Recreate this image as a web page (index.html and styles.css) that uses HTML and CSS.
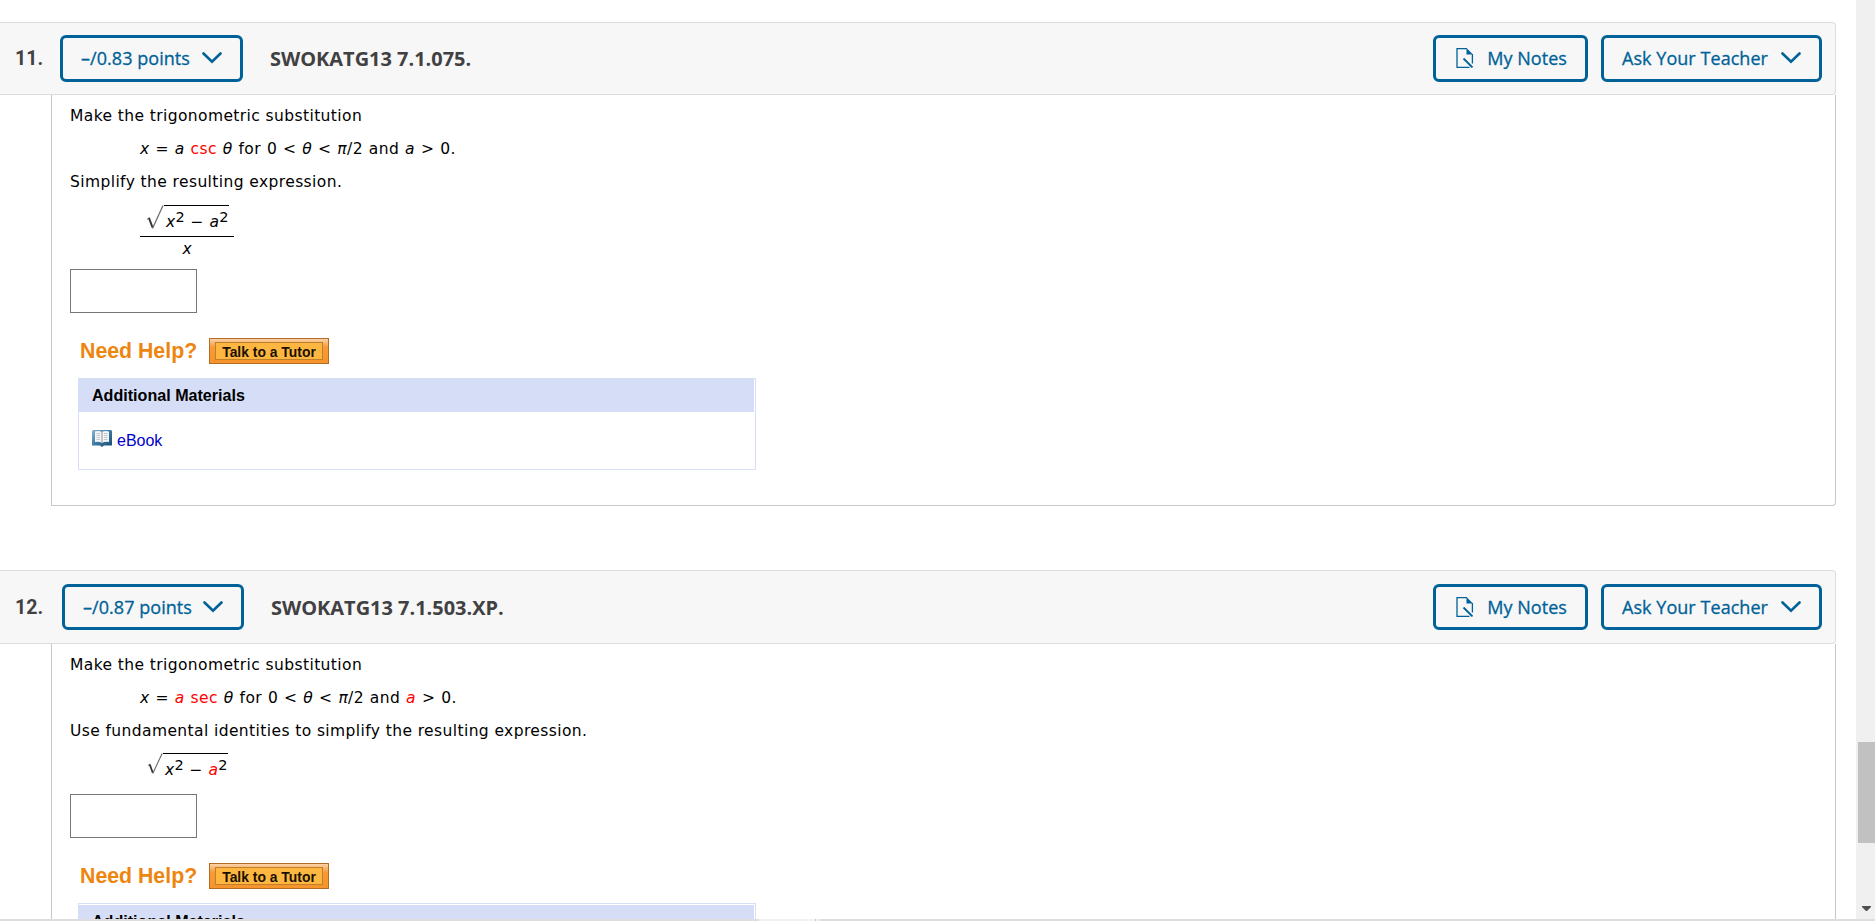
FILE: index.html
```html
<!DOCTYPE html>
<html lang="en">
<head>
  <meta charset="UTF-8">
  <meta name="viewport" content="width=device-width, initial-scale=1.0">
  <title>Assignment</title>
  <link rel="stylesheet" href="styles.css">
</head>
<body>
  <svg class="sprite" width="0" height="0">
    <symbol id="chevron" viewBox="0 0 20 12">
      <path d="M1.5 1.5 L10 9.7 L18.5 1.5" fill="none" stroke="#006298" stroke-width="2.6" stroke-linecap="round"/>
    </symbol>
    <symbol id="notes" viewBox="0 0 18 20">
      <path d="M11 .6 H1 V19.4 H13.5 M16.4 6 V15.5" fill="none" stroke="#006298" stroke-width="1.3"/>
      <path d="M10.5 0 L17 6.5 H10.5 Z" fill="#006298"/>
      <path d="M7.5 10.5 L16.5 19.5" stroke="#006298" stroke-width="1.8"/>
    </symbol>
    <symbol id="radical" viewBox="0 0 18 24" preserveAspectRatio="none">
      <path d="M1 14.5 L3.5 12.5" fill="none" stroke="#666" stroke-width="1"/>
      <path d="M3 13 L6.5 22.5" fill="none" stroke="#333" stroke-width="2"/>
      <path d="M6.5 23.5 L17 .5" fill="none" stroke="#666" stroke-width="1.2"/>
    </symbol>
    <symbol id="book" viewBox="0 0 20 17">
      <linearGradient id="cover" x1="0" y1="0" x2="1" y2="1">
        <stop offset="0" stop-color="#8db4d2"/>
        <stop offset=".5" stop-color="#3d77a3"/>
        <stop offset="1" stop-color="#174a72"/>
      </linearGradient>
      <path d="M0 1 L1 0 H19 L20 1 V15.5 H12 L10 17 L8 15.5 H0 Z" fill="url(#cover)"/>
      <path d="M3 1.5 Q7 .3 10 2 Q13 .3 17 1.5 V12 Q13 11 10 13 Q7 11 3 12 Z" fill="#f4f5f6"/>
      <path d="M10 1.5 V13" stroke="#8b9399" stroke-width="1"/>
      <path d="M4.5 3.5 H8 M4.5 5.5 H8 M4.5 7.5 H8 M4.5 9.5 H8 M12 3.5 H15.5 M12 5.5 H15.5 M12 7.5 H15.5 M12 9.5 H15.5" stroke="#c3c6ca" stroke-width="1"/>
    </symbol>
  </svg>

  <main class="page">
    <section class="question">
      <header class="question-header">
        <span class="number">11.</span>
        <button class="btn points">–/0.83 points <svg class="chevron"><use href="#chevron"/></svg></button>
        <h2 class="title">SWOKATG13 7.1.075.</h2>
        <button class="btn notes"><svg class="note-icon"><use href="#notes"/></svg>My Notes</button>
        <button class="btn ask">Ask Your Teacher <svg class="chevron"><use href="#chevron"/></svg></button>
      </header>
      <div class="question-body">
        <p>Make the trigonometric substitution</p>
        <p class="indent"><i>x</i> = <i>a</i> <span class="red">csc</span> <i>θ</i> for 0 &lt; <i>θ</i> &lt; <i>π</i>/2 and <i>a</i> &gt; 0.</p>
        <p>Simplify the resulting expression.</p>
        <div class="fraction">
          <div class="root"><svg class="radical"><use href="#radical"/></svg><span class="radicand"><i>x</i><sup>2</sup> − <i>a</i><sup>2</sup></span></div>
          <div class="denominator"><i>x</i></div>
        </div>
        <input class="answer" type="text">
        <div class="help">
          <span class="help-label">Need Help?</span>
          <button class="tutor"><span>Talk to a Tutor</span></button>
        </div>
        <div class="materials">
          <h3>Additional Materials</h3>
          <a class="ebook" href="#"><svg class="book"><use href="#book"/></svg>eBook</a>
        </div>
      </div>
    </section>

    <section class="question second">
      <header class="question-header">
        <span class="number">12.</span>
        <button class="btn points">–/0.87 points <svg class="chevron"><use href="#chevron"/></svg></button>
        <h2 class="title">SWOKATG13 7.1.503.XP.</h2>
        <button class="btn notes"><svg class="note-icon"><use href="#notes"/></svg>My Notes</button>
        <button class="btn ask">Ask Your Teacher <svg class="chevron"><use href="#chevron"/></svg></button>
      </header>
      <div class="question-body">
        <p>Make the trigonometric substitution</p>
        <p class="indent"><i>x</i> = <i class="red">a</i> <span class="red">sec</span> <i>θ</i> for 0 &lt; <i>θ</i> &lt; <i>π</i>/2 and <i class="red">a</i> &gt; 0.</p>
        <p>Use fundamental identities to simplify the resulting expression.</p>
        <div class="root plain"><svg class="radical"><use href="#radical"/></svg><span class="radicand"><i>x</i><sup>2</sup> − <i class="red">a</i><sup>2</sup></span></div>
        <input class="answer" type="text">
        <div class="help">
          <span class="help-label">Need Help?</span>
          <button class="tutor"><span>Talk to a Tutor</span></button>
        </div>
        <div class="materials">
          <h3>Additional Materials</h3>
          <a class="ebook" href="#"><svg class="book"><use href="#book"/></svg>eBook</a>
        </div>
      </div>
    </section>
  </main>

  <aside class="scrollbar">
    <div class="thumb"></div>
    <svg class="arrow" viewBox="0 0 9 5"><path d="M0 0 H9 V1 L5 5 H4 L0 1 Z" fill="#505050"/></svg>
  </aside>
  <div class="bottom-edge"></div>
</body>
</html>
```
FILE: styles.css
```css
* {
  margin: 0;
  padding: 0;
  box-sizing: border-box;
}

body {
  width: 1875px;
  height: 921px;
  overflow: hidden;
  display: grid;
  grid-template-columns: 1856px 19px;
  grid-template-rows: 919px 2px;
  background: #fff;
  font-family: "DejaVu Sans", Verdana, sans-serif;
  font-size: 15.5px;
  color: #000;
}

.sprite {
  position: absolute;
}

.page {
  padding-top: 22px;
  overflow: hidden;
}

.question {
  width: 1836px;
  margin-bottom: 64px;
}

.question-header {
  display: flex;
  align-items: center;
  height: 73px;
  padding: 0 13px 0 15px;
  background: #f7f7f7;
  border: 1px solid #ddd;
  border-left: 0;
  border-radius: 0 4px 4px 0;
  font-family: "Open Sans", sans-serif;
}

.second .question-header {
  height: 74px;
}

.number {
  width: 45px;
  font-family: Roboto, sans-serif;
  font-size: 19.5px;
  font-weight: 700;
  color: #414042;
}

.second .number {
  width: 47px;
}

.btn {
  display: flex;
  align-items: center;
  height: 47px;
  padding: 0 18px 1px;
  background: transparent;
  border: 3px solid #006298;
  border-radius: 6px;
  color: #006298;
  font-family: "Open Sans", sans-serif;
  font-size: 18px;
  font-weight: 500;
  letter-spacing: 0.05px;
  -webkit-text-stroke: 0.3px #006298;
  white-space: nowrap;
}

.second .btn {
  height: 46px;
  padding-bottom: 0;
}

.points {
  width: 183px;
  justify-content: space-between;
}

.second .points {
  width: 182px;
}

.chevron {
  width: 20px;
  height: 12px;
}

.title {
  margin-left: 27px;
  font-size: 19.95px;
  font-weight: 700;
  color: #414042;
}

.btn.notes {
  width: 155px;
  margin-left: auto;
  margin-right: 13px;
  padding-left: 20px;
  justify-content: space-between;
}

.note-icon {
  width: 18px;
  height: 20px;
}

.ask {
  width: 221px;
  justify-content: space-between;
}

.question-body {
  height: 411px;
  margin-left: 51px;
  padding: 5px 18px 0;
  border: 1px solid #c7c7c7;
  border-top: 0;
  border-bottom-right-radius: 4px;
}

.question-body p {
  height: 33px;
  line-height: 33px;
  letter-spacing: 0.4px;
  white-space: nowrap;
}

.question-body .indent {
  margin-left: 70px;
  word-spacing: 0.55px;
}

.red {
  color: #f00;
}

.fraction {
  width: 94px;
  margin: 6px 0 0 70px;
}

.root {
  display: flex;
  height: 31px;
  padding-left: 6px;
}

.fraction .root {
  border-bottom: 1px solid #000;
  height: 32px;
}

.plain {
  margin: 5px 0 0 71px;
}

.radical {
  width: 18px;
  height: 24px;
}

.plain .radical {
  width: 16px;
  height: 21px;
}

.radicand {
  width: 65px;
  height: 26px;
  padding-left: 2px;
  border-top: 1px solid #000;
  line-height: 32px;
  letter-spacing: 0.3px;
  word-spacing: 0.5px;
  white-space: nowrap;
}

sup {
  font-size: 14.5px;
  line-height: 0;
  letter-spacing: 0;
  vertical-align: 5px;
}

.denominator {
  height: 32px;
  line-height: 25px;
  text-align: center;
}

.answer {
  display: block;
  width: 127px;
  height: 44px;
  border: 1px solid #767676;
}

.plain + .answer {
  margin-top: 10px;
}

.help {
  display: flex;
  align-items: center;
  height: 26px;
  margin: 25px 0 14px 10px;
}

.help-label {
  width: 129px;
  font: 700 21.3px "Liberation Sans", Arial, sans-serif;
  color: #ee850f;
}

.tutor {
  width: 120px;
  height: 26px;
  padding: 3px 5px;
  background: linear-gradient(#fbd2a8, #f79a35 35%, #f7942b);
  border: 1px solid #b26c24;
}

.tutor span {
  display: block;
  height: 18px;
  background: #fdb740;
  border: 1px solid #c07f2c;
  color: #1b1000;
  font: 700 13.9px/18px "Liberation Sans", Arial, sans-serif;
  white-space: nowrap;
}

.materials {
  width: 678px;
  height: 92px;
  margin-left: 8px;
  border: 1px solid #d7dff7;
  font-family: "Liberation Sans", Arial, sans-serif;
  font-size: 16px;
}

.materials h3 {
  height: 33px;
  margin-right: 1px;
  padding-left: 13px;
  background: #d6def7;
  font-size: 16.1px;
  line-height: 32px;
}

.second .materials {
  padding-top: 1px;
}

.ebook {
  display: flex;
  align-items: center;
  height: 57px;
  padding-left: 13px;
  gap: 5px;
  color: #00c;
  text-decoration: none;
}

.book {
  width: 20px;
  height: 17px;
  margin-bottom: 4px;
}

.scrollbar {
  position: relative;
  background: #f0f0f0;
}

.thumb {
  width: 17px;
  height: 101px;
  margin: 742px 0 0 2px;
  background: #c1c1c1;
}

.arrow {
  position: absolute;
  left: 6px;
  bottom: 8px;
  width: 9px;
  height: 5px;
}

.bottom-edge {
  grid-column: 1 / 3;
  background: linear-gradient(90deg, #dedede 759px, #f1f1f1 759px 815px, #c8c8c8 815px 816px, #eee 816px 820px, #dedede 820px);
}
```
